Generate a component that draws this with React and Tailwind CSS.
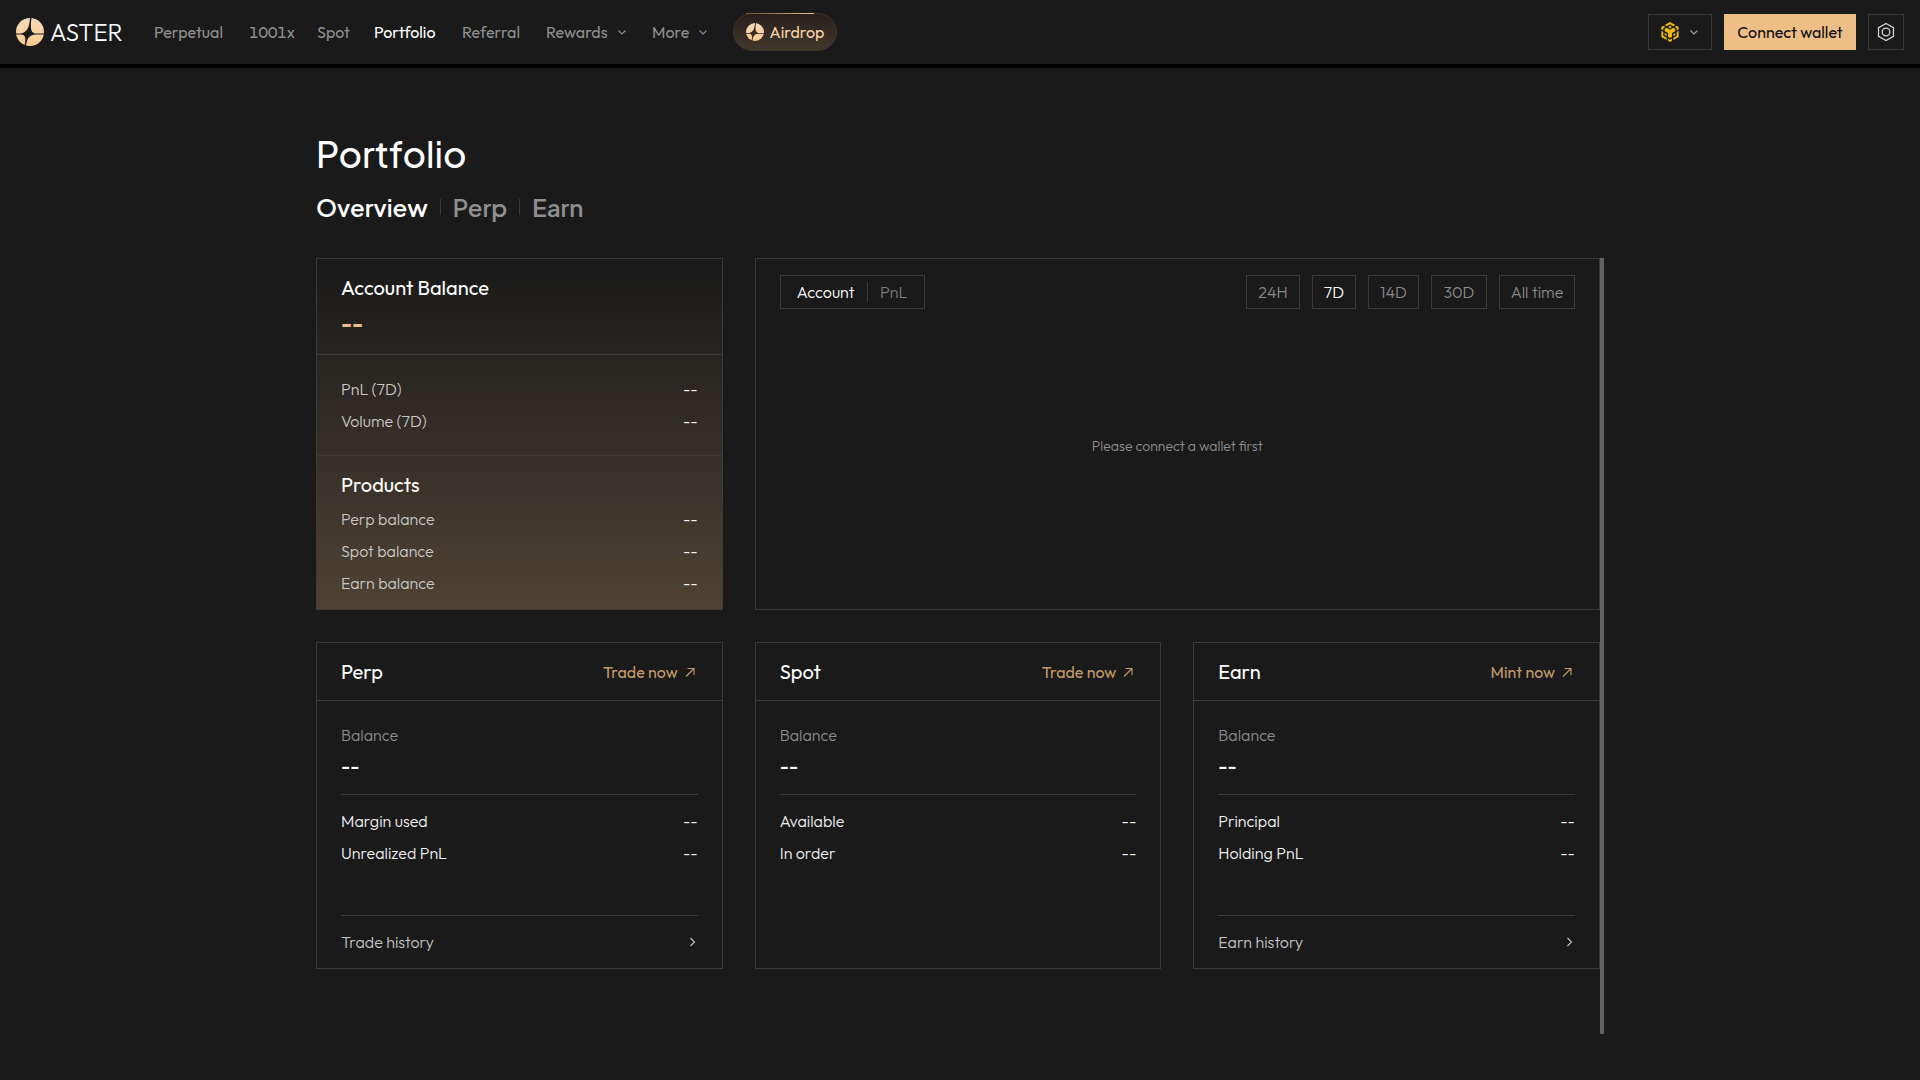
import React from "react";

function AsterMark({ size, id }) {
  return (
    <svg width={size} height={size} viewBox="0 0 28 28" aria-hidden="true">
      <defs>
        <linearGradient id={id} x1="0" y1="0" x2="0" y2="1">
          <stop offset="0" stopColor="#f4d9b8" />
          <stop offset="1" stopColor="#fdca90" />
        </linearGradient>
        <mask id={id + "-cut"}>
          <rect width="28" height="28" fill="white" />
          <path
            d="M14 0C13.4 8 12 14 5 15.4H0V16.6H5C10.5 17 9.6 22 8.6 28H10C10.8 22 12 17.5 19 16.6H28V15.4H19C14 14.5 14.6 8 15.4 0Z"
            fill="black"
          />
        </mask>
      </defs>
      <circle cx="14" cy="14" r="14" fill={`url(#${id})`} mask={`url(#${id}-cut)`} />
    </svg>
  );
}

function BnbMark() {
  return (
    <svg width="20" height="20" viewBox="0 0 24 24" fill="#f0b90b" aria-hidden="true">
      <path d="M5.631 3.676 12 0l6.368 3.676-2.34 1.358L12 2.716 7.972 5.034Z" />
      <path d="M18.368 8.312 16.028 6.954 12 9.272 7.972 6.954 5.632 8.312v2.716l4.026 2.318v4.636L12 19.341l2.341-1.359v-4.636l4.027-2.318Z" />
      <path d="M18.368 15.664v-2.716l-2.34 1.358v2.716ZM20.031 16.624l-4.027 2.318v2.717l6.368-3.677V10.63l-2.341 1.358Z" />
      <path d="M17.69 5.994l2.341 1.358v2.716l2.341-1.358V5.994l-2.341-1.358ZM9.658 19.925v2.716L12 24l2.341-1.36v-2.715L12 21.284Z" />
      <path d="M5.632 15.664l2.34 1.358v-2.716l-2.34-1.358ZM9.658 5.994 12 7.352l2.341-1.358L12 4.636Z" />
      <path d="M3.968 7.352 6.31 5.994 3.968 4.636l-2.34 1.358v2.716l2.34 1.358ZM3.968 11.988 1.627 10.63v7.353l6.368 3.676v-2.717l-4.027-2.318Z" />
    </svg>
  );
}

function SettingsMark() {
  return (
    <svg width="18" height="20" viewBox="0 0 18 20" fill="none" stroke="#d4d4d4" strokeWidth="1.3" aria-hidden="true">
      <path d="M9 1.5 16.5 5.7V14.3L9 18.5 1.5 14.3V5.7Z" />
      <circle cx="9" cy="10" r="3.8" />
    </svg>
  );
}

function StrokeIcon({ d, size = 12 }) {
  return (
    <svg width={size} height={size} viewBox={`0 0 ${size} ${size}`} fill="none" stroke="currentColor" strokeWidth="1.1" aria-hidden="true">
      <path d={d} />
    </svg>
  );
}

const chevronDown = "M2.5 4.5 6 8 9.5 4.5";
const chevronRight = "M4.5 2 8.5 6 4.5 10";
const arrowUpRight = "M4 12.5 12 4.5M5.5 4.5H12V11";

const navLinks = [
  { label: "Perpetual", width: "w-[71px]" },
  { label: "1001x", width: "w-11" },
  { label: "Spot", width: "w-[33px]" },
  { label: "Portfolio", width: "w-16", active: true },
  { label: "Referral", width: "w-[60px]" },
];

function Header() {
  return (
    <header className="flex h-[68px] items-center justify-between border-b-4 border-black px-4">
      <div className="flex items-center">
        <a href="#home" className="flex items-center gap-1.5 text-2xl font-light text-white">
          <AsterMark size={28} id="brand" />
          <span className="w-20">ASTER</span>
        </a>
        <nav className="ml-6 flex items-center gap-6 text-base text-[#8f8f8f]">
          {navLinks.map((l) => (
            <a
              key={l.label}
              href={"#" + l.label}
              className={`${l.width} whitespace-nowrap tabular-nums ${l.active ? "text-white" : ""}`}
            >
              {l.label}
            </a>
          ))}
          <button type="button" className="flex w-[82px] items-center justify-between">
            Rewards <StrokeIcon d={chevronDown} />
          </button>
          <button type="button" className="flex w-[57px] items-center justify-between">
            More <StrokeIcon d={chevronDown} />
          </button>
          <a
            href="#airdrop"
            className="relative flex h-[38px] w-[104px] items-center justify-center gap-1.5 rounded-full border border-[#3c342b] bg-linear-to-b from-[#281f1d] to-[#43382c] text-[#f6d3a8]"
          >
            <span className="absolute -top-px left-3 h-px w-[68px] bg-linear-to-r from-[#6b5740] to-[#edbe85]" />
            <AsterMark size={18} id="airdrop-mark" />
            Airdrop
          </a>
        </nav>
      </div>
      <div className="flex items-center gap-3">
        <button
          type="button"
          aria-label="Network"
          className="flex h-9 w-16 items-center justify-center gap-2 border border-[#3b3b3b] text-[#a0a0a0]"
        >
          <BnbMark />
          <StrokeIcon d={chevronDown} />
        </button>
        <button type="button" className="h-9 w-[132px] bg-[#edbe85] text-base text-[#0d0d0d]">
          Connect wallet
        </button>
        <button
          type="button"
          aria-label="Settings"
          className="flex size-9 items-center justify-center border border-[#3b3b3b]"
        >
          <SettingsMark />
        </button>
      </div>
    </header>
  );
}

function Row({ label, value = "--" }) {
  return (
    <div className="flex h-8 items-center justify-between font-light">
      <dt>{label}</dt>
      <dd className="text-white">{value}</dd>
    </div>
  );
}

function BalanceCard() {
  return (
    <section className="border border-[#3b3b3b] bg-linear-to-b from-[#1a1a1a] to-[#4f4234] text-[#c9c7c4]">
      <div className="border-b border-[#3b3b3b] px-6 py-4">
        <h2 className="text-xl leading-[25px] text-white">Account Balance</h2>
        <p className="mt-2 text-2xl leading-[30px] font-semibold text-[#edbe85]">--</p>
      </div>
      <dl className="border-b border-[#3b3b3b] px-6 py-[18px]">
        <Row label="PnL (7D)" />
        <Row label="Volume (7D)" />
      </dl>
      <div className="px-6 pt-4 pb-2.5">
        <h2 className="text-xl leading-[25px] text-white">Products</h2>
        <dl className="mt-1.5">
          <Row label="Perp balance" />
          <Row label="Spot balance" />
          <Row label="Earn balance" />
        </dl>
      </div>
    </section>
  );
}

const periods = [
  { label: "24H", width: "w-[54px]" },
  { label: "7D", width: "w-11", active: true },
  { label: "14D", width: "w-[51px]" },
  { label: "30D", width: "w-14" },
  { label: "All time", width: "w-[76px]" },
];

function ChartPanel() {
  return (
    <section className="col-span-2 flex flex-col border border-[#3b3b3b] px-6 pt-4 pb-[26px] font-light">
      <div className="flex items-center justify-between">
        <div className="flex h-[34px] items-center border border-[#3b3b3b]">
          <button type="button" className="w-[86px] pl-1 text-white">Account</button>
          <span className="h-5 w-px bg-[#3b3b3b]" />
          <button type="button" className="w-14 pr-1 text-[#7d7d7d]">PnL</button>
        </div>
        <div className="flex gap-3">
          {periods.map((p) => (
            <button
              key={p.label}
              type="button"
              className={`${p.width} h-[34px] border border-[#3b3b3b] whitespace-nowrap ${p.active ? "text-white" : "text-[#8a8a8a]"}`}
            >
              {p.label}
            </button>
          ))}
        </div>
      </div>
      <p className="flex flex-1 items-center justify-center text-sm text-[#8f8f8f]">Please connect a wallet first</p>
    </section>
  );
}

const products = [
  { name: "Perp", action: "Trade now", rows: ["Margin used", "Unrealized PnL"], history: "Trade history" },
  { name: "Spot", action: "Trade now", rows: ["Available", "In order"] },
  { name: "Earn", action: "Mint now", rows: ["Principal", "Holding PnL"], history: "Earn history" },
];

function ProductCard({ name, action, rows, history }) {
  return (
    <section className="flex flex-col border border-[#3b3b3b]">
      <div className="flex h-[58px] items-center justify-between border-b border-[#3b3b3b] px-6">
        <h2 className="text-xl text-white">{name}</h2>
        <a href={"#" + name} className="flex items-center gap-1 text-[#c49a68]">
          {action} <StrokeIcon d={arrowUpRight} size={16} />
        </a>
      </div>
      <div className="flex flex-1 flex-col px-6 pt-[23px]">
        <p className="leading-[22px] font-light text-[#8a8a8a]">Balance</p>
        <p className="mt-1 border-b border-[#3b3b3b] pb-3 text-xl leading-8 font-medium text-white">--</p>
        <dl className="pt-2.5 pb-[46px] text-[#f2f2f2]">
          {rows.map((r) => (
            <Row key={r} label={r} />
          ))}
        </dl>
        {history && (
          <a
            href={"#" + history}
            className="flex h-[53px] items-center justify-between border-t border-[#3b3b3b] font-light text-[#c4c4c4]"
          >
            {history} <StrokeIcon d={chevronRight} />
          </a>
        )}
      </div>
    </section>
  );
}

const tabs = ["Overview", "Perp", "Earn"];

export default function App() {
  return (
    <div className="min-h-screen bg-[#1a1a1a] pb-[46px] font-['Outfit','Lato',sans-serif] text-base">
      <Header />
      <main className="mx-auto w-full max-w-[1288px] pt-[63px]">
        <div className="font-['Plus_Jakarta_Sans','Inter',sans-serif]">
          <h1 className="text-4xl leading-[46px] font-medium text-white">Portfolio</h1>
          <div className="mt-3.5 flex items-center text-2xl leading-8 font-semibold">
            {tabs.map((t, i) => (
              <React.Fragment key={t}>
                {i > 0 && <span className="mx-3 h-4 w-px bg-[#3b3b3b]" />}
                <button type="button" className={i === 0 ? "text-white" : "text-[#8f8f8f]"}>
                  {t}
                </button>
              </React.Fragment>
            ))}
          </div>
        </div>
        <div className="mt-[35px] grid grid-cols-3 gap-8 border-r-4 border-[#636363] pb-[65px]">
          <BalanceCard />
          <ChartPanel />
          {products.map((p) => (
            <ProductCard key={p.name} {...p} />
          ))}
        </div>
      </main>
    </div>
  );
}
